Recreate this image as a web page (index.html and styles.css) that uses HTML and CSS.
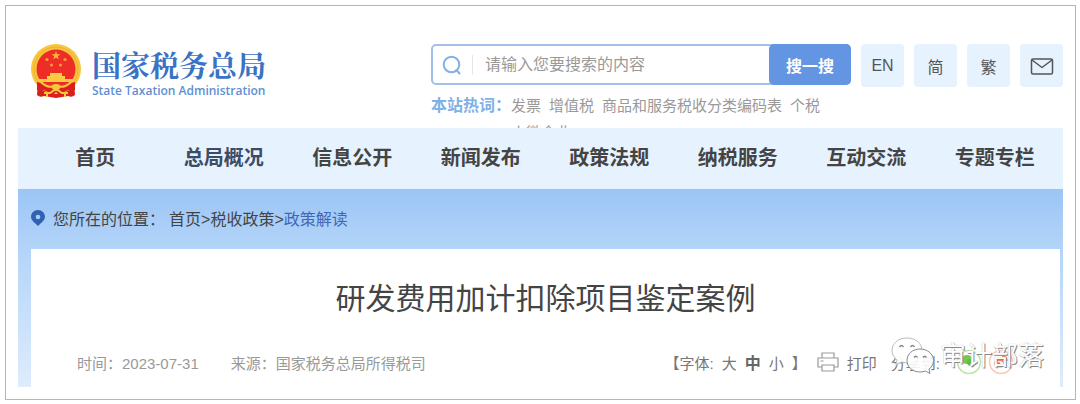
FILE: index.html
```html
<!DOCTYPE html>
<html lang="zh-CN">

<head>
    <meta charset="utf-8">
    <title>研发费用加计扣除项目鉴定案例</title>
    <link rel="stylesheet" href="styles.css">
</head>

<body>
    <div class="page">
        <header class="header">
            <a class="logo" href="#">
                <svg class="emblem" viewBox="0 0 50 54" width="50" height="54">
                    <path d="M7 37 L6 51 Q9 54 13 52 L25 54 L37 52 Q41 54 44 51 L43 37 Z" fill="#d9201f" />
                    <circle cx="25" cy="25" r="25" fill="#f8c63c" />
                    <circle cx="25" cy="25" r="22" fill="none" stroke="#efb22e" stroke-width="1" />
                    <circle cx="25" cy="25" r="19.5" fill="#ee2d27" />
                    <path d="M25 7 l1.1 3.2 h3.4 l-2.7 2 1 3.3 -2.8 -2 -2.8 2 1 -3.3 -2.7 -2 h3.4z" fill="#f8b63c" />
                    <g fill="#f5a03a">
                        <circle cx="16" cy="15.500" r="1.600" />
                        <circle cx="34" cy="15.500" r="1.600" />
                        <circle cx="20.500" cy="21" r="1.500" />
                        <circle cx="29.500" cy="21" r="1.500" />
                    </g>
                    <path d="M19 29 h12 v3 h3 v3 h9 v3 H7 v-3 h9 v-3 h3z" fill="#fbca45" />
                    <path d="M6 38 Q14 39 19 44 L25 40 L31 44 Q36 39 44 38 L44 46 Q38 45 33 48 L37 52 H30 L25 48 L20 52 H13 L17 48 Q12 45 6 46 Z" fill="#d9201f" />
                    <path d="M9 37 Q17 46 25 41 Q33 46 41 37 M13 49 h6 l6 -4 6 4 h6 M16 49 v4 M34 49 v4" fill="none" stroke="#f8c63c" stroke-width="2" />
                    <ellipse cx="25" cy="43" rx="4.500" ry="3" fill="#f8c63c" />
                </svg>
                <span class="logo-text">
                    <span class="logo-cn">国家税务总局</span>
                    <span class="logo-en">State Taxation Administration</span>
                </span>
            </a>

            <div class="tools">
                <div class="tools-row">
                    <form class="search">
                        <label class="search-icon" for="keyword">
                            <svg viewBox="0 0 20 20" width="20" height="20" fill="none" stroke="#7fb0e6" stroke-width="2">
                                <circle cx="9.500" cy="9.500" r="7.800" />
                                <path d="M14.500 15 L17.500 18.500" stroke-linecap="round" />
                            </svg>
                        </label>
                        <input class="search-input" id="keyword" type="text" placeholder="请输入您要搜索的内容">
                        <button class="search-button" type="button">搜一搜</button>
                    </form>
                    <a class="tool" href="#">EN</a>
                    <a class="tool" href="#">简</a>
                    <a class="tool" href="#">繁</a>
                    <a class="tool" href="#" aria-label="邮箱">
                        <svg viewBox="0 0 24 20" width="24" height="20" fill="none" stroke="#555" stroke-width="1.500" stroke-linejoin="round">
                            <rect x="1.500" y="3" width="21" height="15" rx="1.500" />
                            <path d="M2 4 L12 11.500 L22 4" />
                        </svg>
                    </a>
                </div>
                <div class="hot">
                    <span class="hot-label">本站热词：</span>
                    <div class="hot-words">
                        <a href="#">发票</a>
                        <a href="#">增值税</a>
                        <a href="#">商品和服务税收分类编码表</a>
                        <a href="#">个税</a>
                        <a href="#">小微企业</a>
                    </div>
                </div>
            </div>
        </header>

        <nav class="nav">
            <a href="#">首页</a>
            <a class="active" href="#">总局概况</a>
            <a href="#">信息公开</a>
            <a href="#">新闻发布</a>
            <a href="#">政策法规</a>
            <a href="#">纳税服务</a>
            <a href="#">互动交流</a>
            <a href="#">专题专栏</a>
        </nav>

        <main class="main">
            <div class="crumbs">
                <svg class="pin" viewBox="0 0 14 16" width="14" height="16">
                    <path d="M7 0 C3 0 0 3 0 6.800 C0 10.500 3.500 12.500 7 16 C10.500 12.500 14 10.500 14 6.800 C14 3 11 0 7 0 Z" fill="#2f62b3" />
                    <circle cx="7" cy="7" r="2.300" fill="#a9cdf6" />
                </svg>
                <span class="crumbs-label">您所在的位置：</span>
                <span><a href="#">首页</a>&gt;<a href="#">税收政策</a>&gt;<a class="current" href="#">政策解读</a></span>
            </div>

            <article class="article">
                <h1>研发费用加计扣除项目鉴定案例</h1>
                <div class="info">
                    <span>时间：2023-07-31</span>
                    <span class="source">来源：国家税务总局所得税司</span>
                    <div class="actions">
                        <span class="sizes">【字体:
                            <button type="button">大</button>
                            <button class="selected" type="button">中</button>
                            <button type="button">小</button>】</span>
                        <button class="print" type="button">
                            <svg viewBox="0 0 22 20" width="22" height="20" fill="none" stroke="#999" stroke-width="1.200">
                                <path d="M5 6 V1 H17 V6 M5 15 H1 V6 H21 V15 H17 M3.500 9 H6.500" />
                                <path d="M5 13 H17 V19 H5 Z" />
                            </svg>
                            打印
                        </button>
                        <span class="share-label">分享到:</span>
                        <a class="share" href="#" aria-label="微信">
                            <svg viewBox="0 0 26 26" width="26" height="26">
                                <circle cx="13" cy="13" r="11.500" fill="#fff" stroke="#b9e6a8" stroke-width="1.500" />
                                <ellipse cx="11" cy="10.500" rx="5.500" ry="4.500" fill="#74c84e" />
                                <path d="M11 13 Q12 9 16 10 Q20 12 17 16 L18 18 L15 17 Q11 17 11 13" fill="#62bd3b" />
                            </svg>
                        </a>
                        <a class="share" href="#" aria-label="微博">
                            <svg viewBox="0 0 26 26" width="26" height="26">
                                <circle cx="13" cy="13" r="11.500" fill="#fff" stroke="#fbc9b6" stroke-width="1.500" />
                                <ellipse cx="12" cy="14" rx="6" ry="4.500" fill="#f5805d" />
                                <ellipse cx="11.500" cy="14.500" rx="3.500" ry="2.500" fill="#fff" />
                                <circle cx="11" cy="14.500" r="1.300" fill="#ef6a45" />
                                <path d="M14 8 Q19 6 19 12" fill="none" stroke="#f5805d" stroke-width="1.500" />
                            </svg>
                        </a>
                    </div>
                </div>
            </article>
        </main>

        <!-- account signature, floats over the article -->
        <div class="watermark">
            <svg viewBox="0 0 44 38" width="44" height="38">
                <g stroke="#bbb" stroke-width="1" fill="#fff" fill-opacity="0.9">
                    <path d="M16 1 C7 1 1 6.500 1 13.500 C1 17.500 3 20.500 6 23 L5 28 L10.500 25 C12 25.500 14 26 16 26 C25 26 31 20 31 13.500 C31 6.500 25 1 16 1 Z" />
                    <path d="M29 12 C21.500 12 16 17 16 23.500 C16 30 21.500 35 29 35 C31 35 33 34.500 34.500 34 L39 36.500 L38 32 C41 30 42.500 27 42.500 23.500 C42.500 17 36.500 12 29 12 Z" stroke="#888" />
                </g>
                <g fill="none" stroke="#888" stroke-width="1.500">
                    <path d="M8.500 10 q2 -3 4 0 M19.500 10 q2 -3 4 0" />
                    <path d="M23 20.500 q1.500 -2.500 3.500 0 M32 20.500 q1.500 -2.500 3.500 0" />
                </g>
            </svg>
            <span>审计部落</span>
        </div>
    </div>
</body>

</html>
```
FILE: styles.css
```css
* {
    box-sizing: border-box;
}

body {
    margin: 5px 4px 4px 5px;
    background: #fff;
    color: #444;
    font-family: "Liberation Sans", "Noto Sans CJK SC", sans-serif;
    font-size: 16px;
}

a {
    color: inherit;
    text-decoration: none;
}

button {
    margin: 0;
    padding: 0;
    border: none;
    background: none;
    color: inherit;
    font: inherit;
    cursor: pointer;
}

svg {
    display: block;
    flex: none;
}

.page {
    position: relative;
    padding: 0 12px 12px;
    border: 1px solid #b5b5b5;
    box-shadow: 0 0 2px #ccc;
}

/* header */
.header {
    display: flex;
    justify-content: space-between;
    height: 122px;
    padding-top: 38px;
    overflow: hidden;
}

.logo {
    display: flex;
    align-items: flex-start;
    gap: 11px;
    padding-left: 13px;
    color: #3a72c4;
}

.logo-text {
    display: flex;
    flex-direction: column;
    padding-top: 2px;
}

.logo-cn {
    font-family: "Noto Serif CJK SC", "Noto Sans CJK SC", serif;
    font-size: 29px;
    font-weight: bold;
    line-height: 38px;
}

.logo-en {
    color: #5f8fd3;
    font-family: "Open Sans", sans-serif;
    font-size: 12px;
    font-weight: 600;
    line-height: 14px;
}

.tools {
    width: 632px;
}

.tools-row {
    display: flex;
    gap: 10px;
}

.search {
    display: flex;
    flex: 1;
    align-items: center;
    height: 41px;
    border: 2px solid #a3c0ea;
    border-radius: 5px;
}

.search-icon {
    padding: 0 10px 0 9px;
    border-right: 1px solid #e6e6e6;
}

.search-input {
    flex: 1;
    min-width: 0;
    padding: 0 12px;
    border: none;
    outline: none;
    background: none;
    font: inherit;
}

.search-input::placeholder {
    color: #999;
}

.search-button {
    width: 82px;
    height: 41px;
    margin: 0 -2px;
    border-radius: 5px;
    background: #6495e2;
    color: #fff;
    font-weight: bold;
}

.tool {
    display: flex;
    align-items: center;
    justify-content: center;
    width: 43px;
    height: 43px;
    border-radius: 4px;
    background: #e6f2fe;
    color: #555;
}

.hot {
    display: flex;
    width: 424px;
    color: #999;
    font-size: 15px;
    line-height: 27px;
    padding-top: 5px;
}

.hot-label {
    flex: none;
    color: #7fb0e6;
    font-size: 16px;
    font-weight: bold;
}

.hot-words {
    display: flex;
    flex-wrap: wrap;
    column-gap: 8px;
}

/* main menu */
.nav {
    display: grid;
    grid-template-columns: repeat(8, 1fr);
    padding: 0 4px 0 13px;
    background: #e6f2fe;
    font-size: 20px;
    font-weight: bold;
    line-height: 61px;
    text-align: center;
}

.nav .active {
    color: #3d4c66;
}

/* content */
.main {
    padding: 0 3px 0 13px;
    background: linear-gradient(#9bc5f5, #b3d4f9 30%, #deecfd);
}

.crumbs {
    display: flex;
    align-items: center;
    height: 60px;
    padding-bottom: 2px;
}

.crumbs-label {
    margin: 0 4px 0 8px;
}

.crumbs .current {
    color: #3f67b4;
}

.article {
    padding: 28px 46px 10px;
    background: #fff;
}

.article h1 {
    margin: 0;
    font-size: 30px;
    font-weight: normal;
    line-height: 44px;
    text-align: center;
}

.info {
    display: flex;
    align-items: center;
    height: 30px;
    margin-top: 26px;
    color: #999;
    font-size: 15px;
    white-space: nowrap;
}

.source {
    margin-left: 32px;
}

.actions {
    display: flex;
    align-items: center;
    margin-left: auto;
    color: #777;
}

.sizes {
    display: flex;
    align-items: center;
    gap: 8px;
}

.sizes .selected {
    color: #666;
    font-size: 16px;
    font-weight: bold;
}

.print {
    display: flex;
    align-items: center;
    gap: 8px;
    margin: 0 14px 0 10px;
}

.share {
    margin-left: 6px;
}

.share-label {
    margin-right: 10px;
}

.watermark {
    position: absolute;
    right: 31px;
    bottom: 24px;
    display: flex;
    align-items: center;
    gap: 5px;
    color: #fff;
    font-size: 26px;
    line-height: 38px;
    text-shadow: 1px 1px 0 #888, 0 0 1px #aaa;
}
```
